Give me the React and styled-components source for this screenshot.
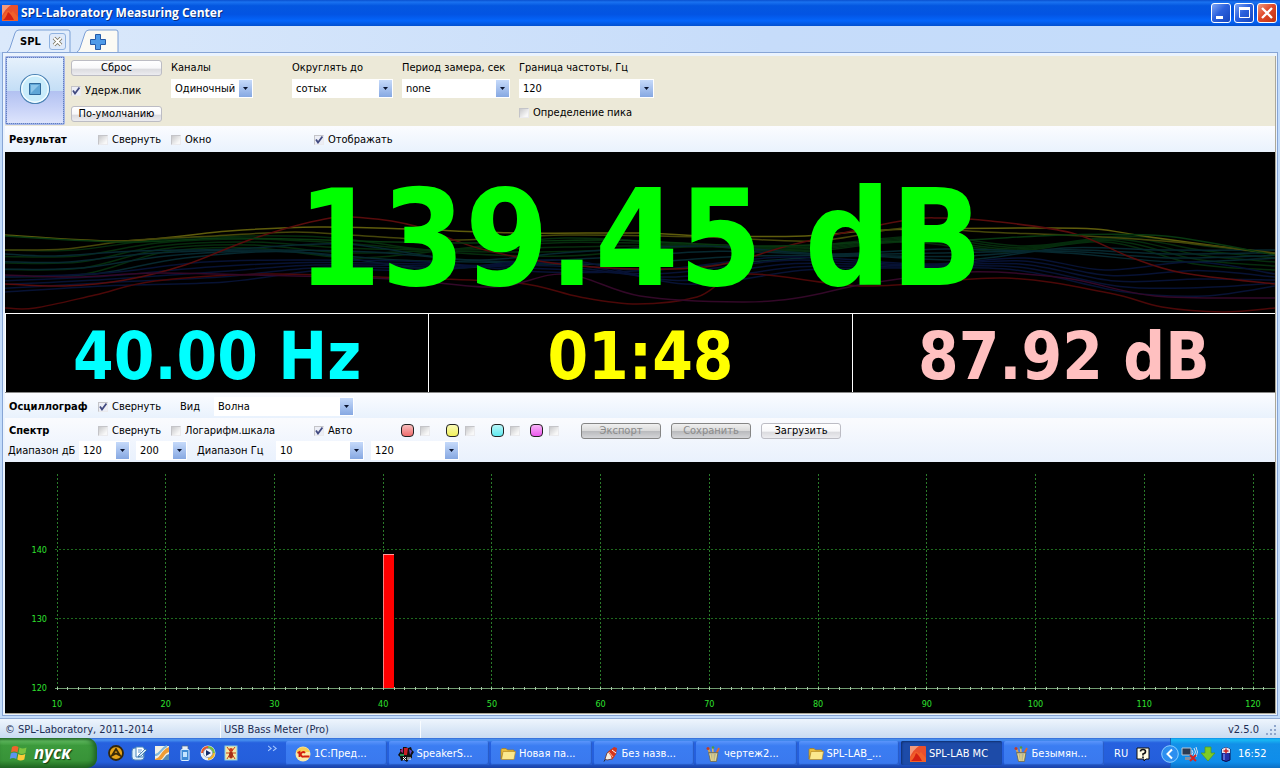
import React from 'react';
import styled, { createGlobalStyle } from 'styled-components';

const GlobalStyle = createGlobalStyle`
  * {
    box-sizing: border-box;
  }

  body {
    margin: 0;
    background: #c3dcfb;
    color: #000;
    font: 11px/14px 'DejaVu Sans Condensed', 'DejaVu Sans', sans-serif;
  }

  button,
  select,
  input {
    font: inherit;
    color: inherit;
    margin: 0;
    padding: 0;
  }
`;

const Page = styled.div`
  min-height: 100vh;
  display: flex;
  flex-direction: column;
`;

/* title bar */

const TitleBar = styled.header`
  height: 26px;
  display: flex;
  align-items: center;
  gap: 3px;
  padding: 0 3px 0 2px;
  background: linear-gradient(#0a50cf 0%, #1a72f0 8%, #0457e0 22%, #0354e3 55%, #0465fb 80%, #0250d0 100%);
`;

const WindowTitle = styled.h1`
  flex: 1;
  margin: 0;
  color: #fff;
  font: bold 12px/20px 'Open Sans', sans-serif;
  text-shadow: 1px 1px 0 #0a2f80;
`;

const WindowButton = styled.button`
  width: 20px;
  height: 20px;
  display: grid;
  place-items: center;
  border: 1px solid #fff;
  border-radius: 3px;
  background: ${({ $close }) =>
    $close
      ? 'linear-gradient(135deg, #ef9a80, #e0492a 45%, #c0330f)'
      : 'linear-gradient(135deg, #7fa6f5, #2c61de 45%, #1545bd)'};
`;

/* tabs */

const TabStrip = styled.nav`
  height: 26px;
  display: flex;
  align-items: flex-end;
  gap: 6px;
  padding-left: 7px;
  background: linear-gradient(90deg, #dbe9fb, #c6dcfa 60%, #c3dcfb);
`;

const Tab = styled.div`
  position: relative;
  width: ${({ $width }) => $width}px;
  height: 23px;
  display: flex;
  align-items: center;
  gap: 8px;
  padding: 2px 0 0 13px;
  font-weight: bold;
`;

const TabShape = styled.svg`
  position: absolute;
  inset: 0;
  width: 100%;
  height: 100%;
`;

const TabButton = styled.button`
  position: relative;
  display: grid;
  place-items: center;
  border: 0;
  background: none;
`;

const TabClose = styled(TabButton)`
  width: 17px;
  height: 17px;
  border: 1px solid #8fb2e0;
  border-radius: 3px;
  background: #dfeafa;
`;

/* main panel */

const Frame = styled.main`
  flex: 1;
  display: flex;
  flex-direction: column;
  margin: 0 2px 2px;
  padding: 3px 1px 1px 2px;
  border: 1px solid #87a5d5;
  background: #eaf3fe;
`;

const Inner = styled.div`
  flex: 1;
  display: flex;
  flex-direction: column;
  border-right: 1px solid #aca899;
  border-bottom: 1px solid #aca899;
`;

const Toolbar = styled.section`
  height: 70px;
  display: grid;
  grid-template-columns: 57px 91px 112px 101px 108px 135px;
  gap: 9px;
  background: #ece9d8;
`;

const StopButton = styled.button`
  width: 60px;
  height: 69px;
  display: grid;
  place-items: center;
  padding-bottom: 4px;
  border: 2px solid #a3b4e6;
  border-radius: 2px;
  outline: 1px dotted #5f7fc0;
  outline-offset: -2px;
  background: linear-gradient(#e6f1fc 0, #c4def6 50%, #b2c1f1 51%, #c6d1f7 75%, #dde4fc 100%);
`;

const ButtonColumn = styled.div`
  display: flex;
  flex-direction: column;
  justify-content: space-between;
  padding: 4px 0;
`;

const PushButton = styled.button`
  flex: none;
  width: ${({ $width }) => $width || '100%'};
  height: 16px;
  border: 1px solid #bcbcc4;
  border-radius: 3px;
  background: linear-gradient(#fff 0, #f8f8fa 50%, #dcdce0 60%, #ececf0 100%);
  line-height: 14px;

  &:disabled {
    border-color: #858585;
    background: linear-gradient(#f0f0f0 0, #dadada 48%, #b9babd 52%, #d4d5d8 100%);
    color: #8b8b8b;
  }
`;

const Field = styled.div`
  display: flex;
  flex-direction: column;
  align-items: flex-start;
  gap: 4px;
  padding-top: 5px;
  white-space: nowrap;
`;

const SelectBox = styled.span`
  flex: none;
  width: ${({ $width }) => $width}px;
  height: 19px;
  display: grid;
  grid-template-columns: 1fr 13px;
  padding: 1px;
  background: #fff;
`;

const SelectInput = styled.select`
  grid-area: 1 / 1 / 2 / 3;
  width: 100%;
  appearance: none;
  border: 0;
  padding-left: 3px;
  background: transparent;
  line-height: 14px;
`;

const SelectArrow = styled.span`
  grid-area: 1 / 2;
  display: grid;
  place-items: center;
  background: linear-gradient(#c6dafa, #86a8e2);
  pointer-events: none;
`;

const CheckLabel = styled.label`
  display: flex;
  align-items: center;
  gap: 4px;
  padding-top: ${({ $drop }) => $drop || 0}px;
  white-space: nowrap;
`;

const CheckBox = styled.input.attrs({ type: 'checkbox' })`
  appearance: none;
  flex: none;
  width: 10px;
  height: 10px;
  border: 1px solid #ebebee;
  border-top-color: #c4c4c8;
  border-left-color: #c4c4c8;
  background: linear-gradient(135deg, #c9c9cb, #f8f8f8 80%);

  &:checked {
    background: #eceef6
      url("data:image/svg+xml,%3Csvg xmlns='http://www.w3.org/2000/svg' viewBox='0 0 8 8'%3E%3Cpath d='M1 3.5 L3 6.5 L7.5 0.5' fill='none' stroke='%23414a80' stroke-width='1.8'/%3E%3C/svg%3E");
  }
`;

const HeaderRow = styled.section`
  height: ${({ $height }) => $height}px;
  display: grid;
  grid-template-columns: 89px 73px 143px 87px 45px 45px 39px 51px auto;
  justify-content: start;
  align-items: center;
  padding: 2px 0 0 4px;
  white-space: nowrap;
  background: linear-gradient(#fbfcff, #e9f2fd);
`;

const SpectrumHead = styled.section`
  height: 44px;
  background: linear-gradient(#fafbfe, #e9f1fd);
`;

const SpectrumRow = styled(HeaderRow)`
  background: none;
`;

const SectionTitle = styled.h2`
  margin: 0;
  font-size: 11px;
  line-height: 14px;
`;

const InlineGroup = styled.div`
  display: flex;
  align-items: center;
  gap: 14px;
  padding-left: 9px;
`;

const Actions = styled.div`
  display: flex;
  gap: 10px;
`;

const RangeRow = styled.div`
  display: grid;
  grid-template-columns: 71px 57px 61px 79px 95px 88px;
  align-items: center;
  padding-left: 3px;
  white-space: nowrap;
`;

const SwatchLabel = styled.label`
  display: flex;
  align-items: center;
  gap: 6px;
`;

const Swatch = styled.span`
  width: 13px;
  height: 13px;
  border: 1px solid #222;
  border-radius: 4px;
  background: linear-gradient(#fff -80%, ${({ $color }) => $color} 100%);
`;

/* readouts */

const MainDisplay = styled.section`
  position: relative;
  height: 161px;
  display: grid;
  place-items: center;
  background: #000;
`;

const Waves = styled.svg`
  position: absolute;
  inset: 0;
  width: 100%;
  height: 100%;
`;

const MainValue = styled.output`
  position: relative;
  padding-top: 13px;
  color: #0f0;
  font-size: 134px;
  font-weight: bold;
  line-height: 148px;
  white-space: nowrap;
`;

const SubDisplays = styled.section`
  display: grid;
  grid-template-columns: repeat(3, 1fr);
  gap: 1px;
  padding: 1px 0 0 1px;
  border-bottom: 1px solid #888;
  background: #fff;
`;

const SubValue = styled.output`
  height: 78px;
  display: grid;
  place-items: center;
  padding-top: 8px;
  background: #000;
  color: ${({ $color }) => $color};
  font-size: 65px;
  font-weight: bold;
  line-height: 70px;
  white-space: nowrap;
`;

/* spectrum chart */

const ChartArea = styled.section`
  flex: 1;
  min-height: 200px;
  display: flex;
  padding: 12px 22px 25px 52px;
  background: #000;
  overflow: hidden;
`;

const Plot = styled.svg`
  flex: 1;
  width: 100%;
  overflow: visible;
  shape-rendering: crispEdges;

  text {
    fill: #2fe02f;
    font-size: 9px;
  }
`;

/* status bar */

const StatusBar = styled.footer`
  height: 20px;
  display: grid;
  grid-template-columns: 215px 200px 1fr auto;
  align-items: center;
  padding: 2px 3px 0 5px;
  border-top: 1px solid #8ea9d2;
  background: linear-gradient(#eef5fd, #c9dcf2);
  color: #1c2d55;
`;

const StatusCell = styled.span`
  padding-left: ${({ $inset }) => ($inset ? 3 : 0)}px;
  border-left: ${({ $inset }) => ($inset ? '1px solid #f8fcff' : '0')};
  min-height: 17px;
  line-height: 17px;
`;

const StatusVersion = styled.span`
  display: flex;
  align-items: center;
  gap: 6px;
`;

/* taskbar */

const Taskbar = styled.footer`
  height: 30px;
  display: flex;
  background: linear-gradient(#3168d5 0, #4993f0 6%, #2661df 16%, #245edb 80%, #1941a5 100%);
  color: #fff;
`;

const StartButton = styled.button`
  width: 97px;
  display: flex;
  align-items: center;
  gap: 5px;
  padding: 0 0 0 9px;
  border: 0;
  border-radius: 0 10px 10px 0;
  background: linear-gradient(#2f7a30 0, #5db75c 10%, #3c9a3c 25%, #389338 75%, #226b22 100%);
  box-shadow: inset -3px 0 5px #1c5f24;
  color: #fff;
  font: italic bold 17px/20px 'Open Sans', sans-serif;
  text-shadow: 1px 1px 1px #123c12;
`;

const QuickLaunch = styled.div`
  width: 189px;
  display: flex;
  align-items: center;
  gap: 7px;
  padding: 0 8px 0 11px;
`;

const QuickButton = styled.button`
  width: 16px;
  height: 16px;
  border: 0;
  background: none;

  &:last-child {
    width: 10px;
    margin: 0 0 8px auto;
  }
`;

const Tasks = styled.div`
  flex: 1;
  display: grid;
  grid-template-columns: repeat(8, 1fr);
  gap: 2px;
  padding: 3px 0;
`;

const TaskButton = styled.button`
  min-width: 0;
  display: flex;
  align-items: center;
  gap: 3px;
  padding: 2px 0 0 9px;
  border: 0;
  border-radius: 2px;
  background: ${({ $active }) => ($active ? '#1d4ba8' : 'linear-gradient(#5b95fb, #3b7df2 20%, #3a78ee)')};
  box-shadow: ${({ $active }) => ($active ? 'inset 1px 1px 2px #10306f' : 'inset -1px -1px 1px #2759c4')};
  color: #fff;
  white-space: nowrap;
`;

const Language = styled.div`
  width: 66px;
  display: flex;
  align-items: center;
  gap: 8px;
  padding: 2px 0 0 10px;
`;

const Tray = styled.div`
  width: 110px;
  display: flex;
  align-items: center;
  gap: 2px;
  padding-top: 2px;
  border-left: 1px solid #1560b8;
  background: linear-gradient(#0c8dea 0, #19b9f3 6%, #1290e8 20%, #0f8dea 80%, #0c6fc4 100%);
`;

const TrayToggle = styled.button`
  width: 18px;
  height: 18px;
  margin-left: -10px;
  border: 0;
  background: none;
`;

const Clock = styled.time`
  margin-left: 2px;
`;

const spectrumBars = [{ hz: 40, db: 139.45 }];
const MIN_HZ = 10;
const MAX_HZ = 120;
const MIN_DB = 120;
const MAX_DB = 151;

const hzToX = (hz) => `${((hz - MIN_HZ) / (MAX_HZ - MIN_HZ)) * 100}%`;
const dbToY = (db) => `${100 - ((db - MIN_DB) / (MAX_DB - MIN_DB)) * 100}%`;

const waveData = [
  { color: '#5f5c0c', points: [[0, 83], [117, 89], [224, 79], [313, 75], [403, 77], [513, 81], [635, 81], [700, 84], [800, 84], [880, 78], [1022, 76], [1090, 77], [1145, 85], [1270, 102]] },
  { color: '#46460a', points: [[0, 98], [60, 97], [130, 88], [210, 84], [290, 80], [360, 84], [450, 88], [560, 83], [700, 85], [810, 89], [900, 76], [980, 80], [1080, 84], [1170, 90], [1270, 101]] },
  { color: '#580c0c', points: [[0, 132], [60, 134], [120, 128], [180, 113], [250, 86], [320, 67], [360, 66], [410, 74], [480, 98], [575, 114], [700, 115], [790, 92], [896, 69], [937, 66], [986, 69], [1067, 81], [1125, 105], [1178, 121], [1270, 132]] },
  { color: '#4c0808', points: [[0, 156], [30, 156], [90, 143], [150, 129], [260, 122], [400, 126], [513, 131], [575, 145], [632, 152], [692, 145], [741, 122], [860, 134], [1000, 126], [1104, 141], [1157, 155], [1218, 160], [1270, 156]] },
  { color: '#330828', points: [[0, 123], [70, 125], [150, 121], [250, 123], [390, 127], [490, 135], [560, 122], [635, 144], [737, 150], [798, 145], [860, 132], [960, 120], [1060, 126], [1150, 144], [1270, 146]] },
  { color: '#083810', points: [[0, 84], [120, 90], [220, 86], [320, 88], [450, 91], [600, 88], [750, 94], [870, 90], [960, 88], [1060, 83], [1160, 84], [1270, 103]] },
];

// strands that fan out between two curves
const strandData = [
  { color: '#062c0d', from: [[0, 98], [70, 98], [150, 88], [240, 84], [330, 86], [440, 100], [560, 104], [680, 95], [800, 94], [920, 84], [1020, 94], [1120, 84], [1200, 94], [1270, 102]], to: [[0, 124], [80, 122], [160, 100], [250, 96], [350, 106], [460, 96], [560, 86], [680, 92], [790, 100], [900, 90], [1000, 100], [1100, 90], [1190, 112], [1270, 118]], count: 5 },
  { color: '#07282f', from: [[0, 102], [50, 104], [130, 99], [230, 97], [340, 92], [460, 108], [570, 100], [700, 94], [820, 102], [940, 97], [1060, 101], [1170, 110], [1270, 106]], to: [[0, 125], [90, 122], [180, 106], [290, 100], [420, 116], [540, 112], [640, 118], [740, 110], [850, 104], [960, 108], [1060, 96], [1160, 98], [1270, 98]], count: 4 },
  { color: '#071234', from: [[0, 125], [100, 121], [200, 110], [300, 108], [420, 110], [540, 120], [650, 118], [780, 105], [920, 112], [1020, 106], [1100, 118], [1190, 110], [1270, 122]], to: [[0, 140], [100, 134], [220, 130], [320, 118], [430, 118], [560, 108], [680, 132], [800, 118], [900, 116], [1010, 118], [1120, 140], [1200, 144], [1270, 134]], count: 5 },
];

const smoothPath = (points) =>
  points.slice(1).reduce((path, [x, y], i) => {
    const [px, py] = points[i];
    const before = points[i - 1] || points[i];
    const after = points[i + 2] || [x, y];
    const c1 = [px + (x - before[0]) / 6, py + (y - before[1]) / 6];
    const c2 = [x - (after[0] - px) / 6, y - (after[1] - py) / 6];
    return `${path} C${c1.join(' ')} ${c2.join(' ')} ${x} ${y}`;
  }, `M${points[0].join(' ')}`);

const strands = strandData.flatMap(({ color, from, to, count }) =>
  Array.from({ length: count }, (_, n) => {
    const t = n / (count - 1);
    const points = from.map(([x, y], i) => {
      const end = to[Math.min(i, to.length - 1)];
      return [x + (end[0] - x) * t, y + (end[1] - y) * t];
    });
    return { color, points };
  })
);

const Select = ({ label, value, width, ...rest }) => (
  <SelectBox $width={width}>
    <SelectInput aria-label={label} defaultValue={value} {...rest}>
      <option>{value}</option>
    </SelectInput>
    <SelectArrow>
      <svg width="5" height="3" viewBox="0 0 5 3">
        <path d="M0 0h5L2.5 3z" fill="#0a1430" />
      </svg>
    </SelectArrow>
  </SelectBox>
);

const LabeledSelect = ({ id, label, value, width, children }) => (
  <Field>
    <label htmlFor={id}>{label}</label>
    <Select id={id} value={value} width={width} />
    {children}
  </Field>
);

const Check = ({ children, checked, drop }) => (
  <CheckLabel $drop={drop}>
    <CheckBox defaultChecked={checked} />
    {children}
  </CheckLabel>
);

const AppIcon = () => (
  <svg width="16" height="16" viewBox="0 0 16 16">
    <rect width="16" height="16" rx="1" fill="#e9502c" />
    <path d="M0 0h9Q3 4 0 11z" fill="#f39a7c" />
    <path d="M0 16v-4l5-6q2-1 4 2l2-2 5 6v4z" fill="#f1602a" />
    <path d="M1 15q3-2 5-8 3 2 6 8z" fill="#d42012" />
  </svg>
);

const FolderIcon = () => (
  <svg width="16" height="16" viewBox="0 0 16 16">
    <path d="M1 3.5l1-1h4l1.5 1.5H14V7H3L1 13z" fill="#e9bd3e" stroke="#a87b17" strokeWidth=".7" />
    <path d="M3 5.500H15.500L14 13.500H1.500z" fill="#fbe88d" stroke="#b98c22" strokeWidth=".7" />
  </svg>
);

const PaintIcon = () => (
  <svg width="16" height="16" viewBox="0 0 16 16">
    <path d="M5 7L3 2" stroke="#d8a24c" strokeWidth="2" />
    <path d="M8 7L7.500 1" stroke="#dfb46a" strokeWidth="1.600" />
    <path d="M11 8l3-6" stroke="#e06a2a" strokeWidth="1.800" />
    <circle cx="3" cy="2.500" r="1.500" fill="#c03b2c" />
    <circle cx="8" cy="1.500" r="1.300" fill="#4b9a45" />
    <path d="M3.500 6.500h9.500L11.500 15.500H5.500z" fill="#b9b493" stroke="#6d6a50" strokeWidth=".8" />
    <path d="M5 8l1.500 7M8 8v7M11.500 8l-1.500 7" stroke="#ecdc84" />
  </svg>
);

const OneCIcon = () => (
  <svg width="16" height="16" viewBox="0 0 16 16">
    <circle cx="8" cy="8" r="7.500" fill="#fbe9a8" />
    <path d="M1 6a7.500 7.500 0 0 1 14 0z" fill="#f8cf58" />
    <path d="M2.500 7l2-1v5M10 7a2.300 2.300 0 1 0-1 3.500h5.500" fill="none" stroke="#d3200e" strokeWidth="1.800" />
  </svg>
);

const SpeakerShopIcon = () => (
  <svg width="16" height="16" viewBox="0 0 16 16">
    <path d="M5 1h3l2 1 3-1 1 3 2 2-2 3v3l-3 1-2 3-3-2-3 1-1-4-2-2 2-3V3h3z" fill="#111" />
    <path d="M2 5l3-3v5z" fill="#a32b7e" />
    <path d="M6 2h4l-1 7H6z" fill="#c91f24" />
    <path d="M11 3l3 2-2 4z" fill="#5c49c9" />
    <path d="M2 8h4v2H2z" fill="#238e52" />
    <path d="M5 11l3 3M8 11l-3 3M10 11v3M12 11v3" stroke="#fff" />
  </svg>
);

const PenIcon = () => (
  <svg width="16" height="16" viewBox="0 0 16 16">
    <path d="M2.500 13L1 15.500" stroke="#222" />
    <path d="M2 13l2-6 5-4 4 4-4 6-5 1z" fill="#f4ede2" stroke="#642e26" strokeWidth=".8" />
    <path d="M5 6l6-5 3 1-1 6-4 6-1-4z" fill="#d5361c" />
    <path d="M6 6l4 5" stroke="#feb38d" />
    <path d="M9 4l4 3" stroke="#fff" />
  </svg>
);

const tasks = [
  { label: '1С:Пред...', icon: <OneCIcon /> },
  { label: 'SpeakerS...', icon: <SpeakerShopIcon /> },
  { label: 'Новая па...', icon: <FolderIcon /> },
  { label: 'Без назв...', icon: <PenIcon /> },
  { label: 'чертеж2...', icon: <PaintIcon /> },
  { label: 'SPL-LAB_...', icon: <FolderIcon /> },
  { label: 'SPL-LAB MC', icon: <AppIcon />, active: true },
  { label: 'Безымян...', icon: <PaintIcon /> },
];

const quickIcons = [
  {
    name: 'AIMP',
    art: (
      <>
        <circle cx="8" cy="8" r="7" fill="#e8a519" stroke="#33270b" strokeWidth="1.800" />
        <path d="M4 10.500L8 4l4 6.500-4-2z" fill="none" stroke="#3b2b08" strokeWidth="1.800" />
      </>
    ),
  },
  {
    name: 'Desktop',
    art: (
      <>
        <rect x="1" y="3" width="12" height="12" rx="3" fill="#dff0fc" stroke="#5386b8" />
        <path d="M5 2h7l2 3-2 7H5z" fill="#fff" stroke="#4484bc" />
        <path d="M7 5h4M7 7h3" stroke="#5f97cb" />
        <path d="M8 10l6-6 2 1-6 6-3 1z" fill="#d5ebfa" stroke="#2864a0" strokeWidth=".8" />
      </>
    ),
  },
  {
    name: 'Viewer',
    art: (
      <>
        <rect x="1" y="1" width="14" height="14" fill="#f3f0e4" />
        <path d="M1 14c6-1 5-8 14-12v5c-6 2-5 7-9 8H1z" fill="#ef9c35" />
        <path d="M1 10c5 0 5-6 12-9" fill="none" stroke="#80b7da" strokeWidth="2" />
        <path d="M8 15c3-2 3-5 7-6v6z" fill="#568cb4" />
      </>
    ),
  },
  {
    name: 'Drive',
    art: (
      <>
        <rect x="5" y="1" width="6" height="4" fill="#e9eef4" stroke="#49688c" strokeWidth=".7" />
        <rect x="4" y="4.500" width="8" height="11" rx="1" fill="#3f8bd6" stroke="#d9efff" />
        <path d="M6 7h4v5H6z" fill="#c5e5ff" />
      </>
    ),
  },
  {
    name: 'Media',
    art: (
      <>
        <circle cx="8" cy="8" r="7.500" fill="#e9eef4" />
        <path d="M8 1a7 7 0 0 1 7 7h-4L8 4z" fill="#74bd3f" />
        <path d="M1 8a7 7 0 0 1 7-7v3L4 8z" fill="#e6572a" />
        <path d="M8 15a7 7 0 0 0 7-7h-4l-3 4z" fill="#f0b429" />
        <circle cx="8" cy="8" r="4.500" fill="#f5f7fc" stroke="#8797b8" strokeWidth=".8" />
        <path d="M6 5v6L11 8z" fill="#142c69" />
      </>
    ),
  },
  {
    name: 'Ant',
    art: (
      <>
        <rect x="2" y="1" width="12" height="14" fill="#f6e7a0" stroke="#8bcbe0" />
        <path d="M4 2l3 4M12 2L9 6M3 8h10M4 14l3-5M12 14L9 9" stroke="#c63f1c" />
        <ellipse cx="8" cy="5" rx="2" ry="2" fill="#cd391e" />
        <ellipse cx="8" cy="10" rx="2" ry="3.500" fill="#a62f17" />
      </>
    ),
  },
  {
    name: 'More',
    art: <path d="M0 3l5 4-5 4M8 3l5 4-5 4" fill="none" stroke="#a7c9ff" strokeWidth="1.800" />,
  },
];

const swatches = [
  { name: 'Красный', color: '#f06c6c' },
  { name: 'Жёлтый', color: '#f2f25c' },
  { name: 'Голубой', color: '#60eaf0' },
  { name: 'Пурпурный', color: '#ec58ee' },
];

const range = (from, to, step) => Array.from({ length: Math.floor((to - from) / step) + 1 }, (_, i) => from + i * step);

const SpectrumChart = () => (
  <ChartArea>
    <Plot>
      {range(MIN_HZ, MAX_HZ, 10).map((hz) => (
        <g key={hz}>
          <line x1={hzToX(hz)} x2={hzToX(hz)} y1="0" y2="100%" stroke="#2a7a2a" strokeDasharray="2 2" />
          <text x={hzToX(hz)} y="100%" dy="19" textAnchor="middle">
            {hz}
          </text>
        </g>
      ))}
      {[120, 130, 140].map((db) => (
        <g key={db}>
          {db > MIN_DB && (
            <line x1="-2" x2="102%" y1={dbToY(db)} y2={dbToY(db)} stroke="#1d6a1d" strokeDasharray="2 2" />
          )}
          <text x="-10" y={dbToY(db)} dy="3" textAnchor="end">
            {db}
          </text>
        </g>
      ))}
      <line x1="-2" x2="102%" y1="100%" y2="100%" stroke="#6f9a6f" />
      {range(MIN_HZ, MAX_HZ + 1, 1).map((hz) => (
        <svg key={hz} x={hzToX(hz)} y="100%" overflow="visible">
          <line x1="0" x2="0" y1="-1" y2="2" stroke="#a8c8a8" />
        </svg>
      ))}
      {spectrumBars.map(({ hz, db }) => (
        <svg
          key={hz}
          x={hzToX(hz)}
          y={dbToY(db)}
          width={hzToX(MIN_HZ + 1)}
          height={`${((db - MIN_DB) / (MAX_DB - MIN_DB)) * 100}%`}
        >
          <rect width="100%" height="100%" fill="#f00" />
          <rect width="1" height="100%" fill="#ff9c9c" />
          <rect width="100%" height="1" fill="#ff9c9c" />
        </svg>
      ))}
    </Plot>
  </ChartArea>
);

const App = () => (
  <>
    <GlobalStyle />
    <Page>
      <TitleBar>
        <AppIcon />
        <WindowTitle>SPL-Laboratory Measuring Center</WindowTitle>
        <WindowButton aria-label="Свернуть окно">
          <svg width="14" height="14">
            <path d="M2 10h7v3H2z" fill="#fff" />
          </svg>
        </WindowButton>
        <WindowButton aria-label="Развернуть окно">
          <svg width="14" height="14">
            <path d="M2.500 2.500h10v9h-10z" fill="none" stroke="#fff" />
            <path d="M2 1h11v3H2z" fill="#fff" />
          </svg>
        </WindowButton>
        <WindowButton $close aria-label="Закрыть окно">
          <svg width="14" height="14">
            <path d="M2 2l10 10M12 2L2 12" stroke="#fff" strokeWidth="2.300" />
          </svg>
        </WindowButton>
      </TitleBar>

      <TabStrip>
        <Tab $width={64}>
          <TabShape viewBox="0 0 64 23" preserveAspectRatio="none">
            <path d="M0 23Q2 22 3 19L8 4Q9 1 12 1h49q2 0 2 2v20" fill="#e3eefc" stroke="#7b9fd6" />
          </TabShape>
          <TabButton>SPL</TabButton>
          <TabClose aria-label="Закрыть вкладку">
            <svg width="11" height="11" viewBox="0 0 11 11">
              <path d="M2 2l7 7M9 2L2 9" stroke="#7e7965" strokeWidth="3.600" />
              <path d="M2 2l7 7M9 2L2 9" stroke="#fff" strokeWidth="1.800" />
            </svg>
          </TabClose>
        </Tab>
        <Tab $width={42}>
          <TabShape viewBox="0 0 42 23" preserveAspectRatio="none">
            <path d="M0 23Q2 22 3 19L8 4Q9 1 12 1h27q2 0 2 2v20" fill="#fbfaf4" stroke="#7b9fd6" />
          </TabShape>
          <TabButton aria-label="Новая вкладка">
            <svg width="16" height="16" viewBox="0 0 16 16">
              <path d="M5.500.5h5v5h5v5h-5v5h-5v-5h-5v-5h5z" fill="#4f9be8" stroke="#245ba8" />
            </svg>
          </TabButton>
        </Tab>
      </TabStrip>

      <Frame>
        <Inner>
          <Toolbar>
            <StopButton aria-label="Стоп">
              <svg width="32" height="32" viewBox="0 0 32 32">
                <circle cx="16" cy="16" r="14.500" fill="#c9ecfb" stroke="#4c82b4" strokeWidth="1.200" />
                <circle cx="16" cy="16" r="13.200" fill="none" stroke="#f2fcff" strokeWidth="1.400" />
                <path d="M10.500 10.500h11v11h-11z" fill="#5fa6d6" stroke="#2f6a9c" />
                <path d="M12 12h8L12 20z" fill="#8cc6ea" />
              </svg>
            </StopButton>
            <ButtonColumn>
              <PushButton>Сброс</PushButton>
              <Check checked>Удерж.пик</Check>
              <PushButton>По-умолчанию</PushButton>
            </ButtonColumn>
            <LabeledSelect id="channels" label="Каналы" value="Одиночный" width={82} />
            <LabeledSelect id="rounding" label="Округлять до" value="сотых" width={101} />
            <LabeledSelect id="period" label="Период замера, сек" value="none" width={108} />
            <LabeledSelect id="limit" label="Граница частоты, Гц" value="120" width={135}>
              <Check drop={4}>Определение пика</Check>
            </LabeledSelect>
          </Toolbar>

          <HeaderRow $height={26}>
            <SectionTitle>Результат</SectionTitle>
            <Check>Свернуть</Check>
            <Check>Окно</Check>
            <Check checked>Отображать</Check>
          </HeaderRow>
          <MainDisplay>
            <Waves viewBox="0 0 1270 161" preserveAspectRatio="none">
              {[...strands, ...waveData].map(({ color, points }, i) => (
                <path key={i} d={smoothPath(points)} fill="none" stroke={color} strokeWidth="1.500" />
              ))}
            </Waves>
            <MainValue>139.45 dB</MainValue>
          </MainDisplay>
          <SubDisplays>
            <SubValue $color="#0ff">40.00 Hz</SubValue>
            <SubValue $color="#ff0">01:48</SubValue>
            <SubValue $color="#ffc0c0">87.92 dB</SubValue>
          </SubDisplays>

          <HeaderRow $height={25}>
            <SectionTitle>Осциллограф</SectionTitle>
            <Check checked>Свернуть</Check>
            <InlineGroup>
              <label htmlFor="view">Вид</label>
              <Select id="view" value="Волна" width={140} />
            </InlineGroup>
          </HeaderRow>

          <SpectrumHead>
            <SpectrumRow $height={23}>
              <SectionTitle>Спектр</SectionTitle>
              <Check>Свернуть</Check>
              <Check>Логарифм.шкала</Check>
              <Check checked>Авто</Check>
              {swatches.map(({ name, color }) => (
                <SwatchLabel key={name} aria-label={name}>
                  <Swatch $color={color} />
                  <CheckBox />
                </SwatchLabel>
              ))}
              <Actions>
                <PushButton $width="80px" disabled>
                  Экспорт
                </PushButton>
                <PushButton $width="80px" disabled>
                  Сохранить
                </PushButton>
                <PushButton $width="80px">Загрузить</PushButton>
              </Actions>
            </SpectrumRow>
            <RangeRow>
              <span>Диапазон дБ</span>
              <Select label="Диапазон дБ, от" value="120" width={51} />
              <Select label="Диапазон дБ, до" value="200" width={51} />
              <span>Диапазон Гц</span>
              <Select label="Диапазон Гц, от" value="10" width={88} />
              <Select label="Диапазон Гц, до" value="120" width={88} />
            </RangeRow>
          </SpectrumHead>
          <SpectrumChart />
        </Inner>
      </Frame>

      <StatusBar>
        <StatusCell>© SPL-Laboratory, 2011-2014</StatusCell>
        <StatusCell $inset>USB Bass Meter (Pro)</StatusCell>
        <StatusCell $inset />
        <StatusVersion>
          v2.5.0
          <svg width="12" height="12" viewBox="0 0 12 12">
            <path d="M9 1h2v2H9zM5 5h2v2H5zM9 5h2v2H9zM1 9h2v2H1zM5 9h2v2H5zM9 9h2v2H9z" fill="#8fa6cc" />
          </svg>
        </StatusVersion>
      </StatusBar>

      <Taskbar>
        <StartButton>
          <svg width="20" height="20" viewBox="0 0 20 20">
            <path d="M3 4q3-2 6.500 0L8.500 9.500Q5 7.500 2 9.500z" fill="#f0642c" />
            <path d="M10.500 4.500q3 2 7 0L16.500 10q-4 2-7 0z" fill="#7cc440" />
            <path d="M1.800 10.500q3-2 6.500 0L7.300 16Q4 14 .8 16z" fill="#5c94f0" />
            <path d="M9.300 11q3 2 7 0l-1 5.500q-4 2-7 0z" fill="#fccb38" />
          </svg>
          пуск
        </StartButton>
        <QuickLaunch>
          {quickIcons.map(({ name, art }) => (
            <QuickButton key={name} aria-label={name}>
              <svg width="100%" height="100%" viewBox="0 0 16 16">
                {art}
              </svg>
            </QuickButton>
          ))}
        </QuickLaunch>
        <Tasks>
          {tasks.map(({ label, icon, active }) => (
            <TaskButton key={label} $active={active}>
              {icon}
              {label}
            </TaskButton>
          ))}
        </Tasks>
        <Language>
          RU
          <svg width="14" height="15" viewBox="0 0 14 15">
            <path d="M1 1h12v11h-3l-2 2v-2H1z" fill="#fffde6" stroke="#111" />
            <path d="M4.500 4.500q0-2 2.500-2t2.500 2T7 7v1.500M7 9.500V11" fill="none" stroke="#111" strokeWidth="1.600" />
          </svg>
        </Language>
        <Tray>
          <TrayToggle aria-label="Показать значки">
            <svg width="18" height="18" viewBox="0 0 18 18">
              <circle cx="9" cy="9" r="8.300" fill="#2c8ff0" stroke="#8fd0ff" />
              <path d="M11 4.500L6.500 9l4.500 4.500" fill="none" stroke="#fff" strokeWidth="2" />
            </svg>
          </TrayToggle>
          <svg width="17" height="16" viewBox="0 0 17 16">
            <path d="M1 2h9v7H1z" fill="#2b3a52" stroke="#b9c6d6" />
            <path d="M4 11h8v3H4z" fill="#8292a6" />
            <path d="M11 4q2 2 0 5M13 2q3 4 0 8M15 1q3 5 0 10" fill="none" stroke="#d5e2f2" />
            <path d="M9 9l6 6M15 9l-6 6" stroke="#d42424" strokeWidth="2" />
          </svg>
          <svg width="16" height="16" viewBox="0 0 16 16">
            <path d="M5 1h6v6h4l-7 8-7-8h4z" fill="#7ecb25" stroke="#4d9a1b" strokeWidth=".7" />
          </svg>
          <svg width="16" height="16" viewBox="0 0 16 16">
            <path d="M4 3q4-3 8 0v11q-4 3-8 0z" fill="#2430a8" stroke="#0c1150" />
            <path d="M4 3q4-3 8 0v4H4z" fill="#dfe2f2" />
            <path d="M8 2.500v5M5.500 5h5" stroke="#cc2020" strokeWidth="1.500" />
            <path d="M6 8v6" stroke="#8fa3ff" />
          </svg>
          <Clock>16:52</Clock>
        </Tray>
      </Taskbar>
    </Page>
  </>
);

export default App;
